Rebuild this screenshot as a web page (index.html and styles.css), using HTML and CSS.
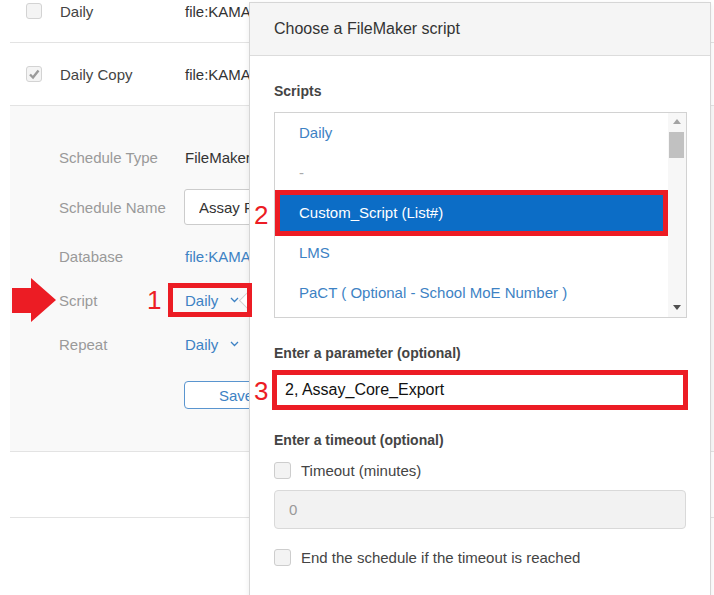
FILE: index.html
```html
<!DOCTYPE html>
<html lang="en">

<head>
    <meta charset="utf-8">
    <title>Choose a FileMaker script</title>
    <link rel="stylesheet" href="styles.css">
</head>

<body>
    <div class="page">
        <!-- schedule list behind the dialog -->
        <div class="schedules">
            <div class="row">
                <span class="check"></span>
                <span class="name">Daily</span>
                <span class="file">file:KAMAR_Assay</span>
            </div>
            <div class="row">
                <span class="check checked">
                    <svg width="12" height="12" viewBox="0 0 12 12"><path d="M2 6.5 L5 9.5 L10.5 2.5" fill="none" stroke="#9a9a9a" stroke-width="2.4"/></svg>
                </span>
                <span class="name">Daily Copy</span>
                <span class="file">file:KAMAR_Assay</span>
            </div>
            <div class="details">
                <div class="field">
                    <span class="label">Schedule Type</span>
                    <span class="value">FileMaker Script</span>
                </div>
                <div class="field name-field">
                    <span class="label">Schedule Name</span>
                    <input class="text-input" type="text" value="Assay Panel Export">
                </div>
                <div class="field">
                    <span class="label">Database</span>
                    <span class="value link">file:KAMAR_Assay</span>
                </div>
                <div class="field">
                    <span class="label">Script</span>
                    <span class="value link picker marked">Daily
                        <svg class="chev" width="9" height="6" viewBox="0 0 9 6"><path d="M1 1 L4.5 4.5 L8 1" fill="none" stroke="#3d82c4" stroke-width="1.3"/></svg>
                    </span>
                </div>
                <div class="field">
                    <span class="label">Repeat</span>
                    <span class="value link picker">Daily
                        <svg class="chev" width="9" height="6" viewBox="0 0 9 6"><path d="M1 1 L4.5 4.5 L8 1" fill="none" stroke="#3d82c4" stroke-width="1.3"/></svg>
                    </span>
                </div>
                <div class="actions">
                    <button class="btn-save">Save</button>
                </div>
            </div>
            <div class="row empty"></div>
        </div>

        <!-- popover dialog -->
        <div class="dialog">
            <div class="pointer"></div>
            <div class="dialog-head">Choose a FileMaker script</div>
            <div class="dialog-body">
                <div class="group-label">Scripts</div>
                <div class="listbox">
                    <div class="items">
                        <div class="item">Daily</div>
                        <div class="item muted">-</div>
                        <div class="item selected">Custom_Script (List#)</div>
                        <div class="item">LMS</div>
                        <div class="item">PaCT ( Optional - School MoE Number )</div>
                    </div>
                    <div class="scrollbar">
                        <div class="arrow up"></div>
                        <div class="thumb"></div>
                        <div class="track"></div>
                        <div class="arrow down"></div>
                    </div>
                </div>

                <div class="group-label param-label">Enter a parameter (optional)</div>
                <input class="param-input" type="text" value="2, Assay_Core_Export">

                <div class="group-label timeout-label">Enter a timeout (optional)</div>
                <label class="opt first-opt"><span class="box"></span>Timeout (minutes)</label>
                <input class="timeout-input" type="text" value="0" disabled>
                <label class="opt last-opt"><span class="box"></span>End the schedule if the timeout is reached</label>
            </div>
        </div>

        <!-- red annotations -->
        <svg class="red-arrow" width="46" height="46" viewBox="0 0 46 46">
            <polygon points="0,10 19,10 19,0 44,22 19,44 19,35 0,35" fill="#ec1c24"/>
        </svg>
        <span class="step step-1">1</span>
        <span class="step step-2">2</span>
        <span class="step step-3">3</span>
    </div>
</body>

</html>
```

FILE: styles.css
```css
*,
*::before,
*::after {
    box-sizing: border-box;
}

body {
    margin: 0;
    background: #fff;
    font-family: "Liberation Sans", Arial, sans-serif;
    color: #333;
}

.page {
    position: relative;
    width: 714px;
    height: 595px;
    overflow: hidden;
}

/* list in the background */
.schedules {
    margin-top: -20px;
    margin-left: 10px;
}

.row {
    display: flex;
    align-items: center;
    height: 63px;
    border-bottom: 1px solid #e3e3e3;
    padding-left: 16px;
    font-size: 15px;
}

.row.empty {
    height: 66px;
}

.check {
    display: flex;
    align-items: center;
    justify-content: center;
    width: 16px;
    height: 16px;
    border: 1px solid #d3d3d3;
    border-radius: 3px;
    background: #f4f4f4;
}

.name {
    width: 125px;
    margin-left: 18px;
    color: #444;
}

.file {
    color: #333;
}

.details {
    background: #f9f9f9;
    border-bottom: 1px solid #e3e3e3;
    padding: 29px 0 42px 49px;
    font-size: 15px;
}

.field {
    display: flex;
    align-items: center;
    height: 44px;
}

.field.name-field {
    margin: 6px 0 5px;
}

.label {
    width: 126px;
    color: #9a9a9a;
}

.value {
    color: #333;
    white-space: nowrap;
}

.link {
    color: #3d82c4;
}

.picker {
    position: relative;
    display: flex;
    align-items: center;
    height: 44px;
}

.chev {
    margin-left: 12px;
}

.marked::after {
    content: "";
    position: absolute;
    left: -17px;
    top: 5px;
    width: 84px;
    height: 34px;
    border: 5px solid #ec1c24;
    z-index: 5;
}

.text-input {
    width: 220px;
    height: 36px;
    margin-left: -1px;
    padding: 0 14px;
    border: 1px solid #ccc;
    border-radius: 3px;
    background: #fff;
    font-family: "Liberation Sans", Arial, sans-serif;
    font-size: 15px;
    color: #333;
}

.actions {
    margin-top: 15px;
    padding-left: 125px;
}

.btn-save {
    width: 110px;
    height: 28px;
    padding: 0 0 0 34px;
    text-align: left;
    border: 1px solid #5a95cf;
    border-radius: 4px;
    background: #fff;
    font-family: "Liberation Sans", Arial, sans-serif;
    font-size: 15px;
    color: #3d82c4;
}

/* dialog */
.dialog {
    position: absolute;
    left: 249px;
    top: 2px;
    width: 462px;
    height: 620px;
    background: #fff;
    border: 1px solid #d6d6d6;
    box-shadow: 0 2px 6px rgba(0, 0, 0, 0.08);
    z-index: 2;
}

.pointer {
    position: absolute;
    left: -8px;
    top: 290px;
    width: 15px;
    height: 15px;
    background: #fff;
    border-left: 1px solid #d0d0d0;
    border-bottom: 1px solid #d0d0d0;
    transform: rotate(45deg);
}

.dialog-head {
    position: relative;
    height: 53px;
    line-height: 52px;
    padding-left: 24px;
    background: #f5f5f5;
    border-bottom: 1px solid #dcdcdc;
    font-size: 16px;
    color: #333;
}

.dialog-body {
    padding: 25px 23px 0 24px;
}

.group-label {
    height: 20px;
    line-height: 20px;
    font-size: 14px;
    font-weight: bold;
    color: #444;
}

.listbox {
    display: flex;
    margin-top: 11px;
    height: 206px;
    border: 1px solid #d2d2d2;
    overflow: hidden;
}

.items {
    flex: 1;
}

.item {
    position: relative;
    height: 40px;
    line-height: 40px;
    padding-left: 24px;
    font-size: 15px;
    color: #3d82c4;
    white-space: nowrap;
}

.item.muted {
    color: #aaa;
}

.item.selected {
    background: #0c6dc6;
    color: #fff;
}

.item.selected::after {
    content: "";
    position: absolute;
    left: 0;
    right: 0;
    top: -3px;
    bottom: -3px;
    border: 5px solid #ec1c24;
}

.scrollbar {
    display: flex;
    flex-direction: column;
    width: 18px;
    background: #f7f7f7;
}

.arrow {
    height: 18px;
    position: relative;
}

.arrow::after {
    content: "";
    position: absolute;
    left: 5px;
    border-left: 4px solid transparent;
    border-right: 4px solid transparent;
}

.arrow.up::after {
    top: 6px;
    border-bottom: 5px solid #a3a3a3;
}

.arrow.down::after {
    top: 6px;
    border-top: 5px solid #505050;
}

.thumb {
    height: 26px;
    margin: 1px 2px 0 1px;
    background: #c1c1c1;
}

.track {
    flex: 1;
}

.param-label {
    margin-top: 25px;
}

.param-input {
    display: block;
    width: 412px;
    height: 36px;
    margin-top: 9px;
    padding: 0 10px;
    border: 1px solid #cfcfcf;
    outline: 5px solid #ec1c24;
    outline-offset: -3px;
    background: #fff;
    font-family: "Liberation Sans", Arial, sans-serif;
    font-size: 16px;
    color: #111;
}

.timeout-label {
    margin-top: 22px;
}

.opt {
    display: flex;
    align-items: center;
    height: 20px;
    font-size: 15px;
    color: #444;
}

.opt .box {
    width: 17px;
    height: 17px;
    margin-right: 10px;
    border: 1px solid #cdcdcd;
    border-radius: 3px;
    background: #f3f3f3;
}

.first-opt {
    margin-top: 10px;
}

.last-opt {
    margin-top: 18px;
}

.timeout-input {
    display: block;
    width: 412px;
    height: 39px;
    margin-top: 10px;
    padding: 0 14px;
    border: 1px solid #d9d9d9;
    border-radius: 4px;
    background: #f2f2f2;
    font-family: "Liberation Sans", Arial, sans-serif;
    font-size: 15px;
    color: #999;
}

/* annotations */
.red-arrow {
    position: absolute;
    left: 12px;
    top: 278px;
    z-index: 6;
}

.step {
    position: absolute;
    font-size: 26px;
    line-height: 30px;
    color: #ec1c24;
    z-index: 6;
}

.step-1 {
    left: 147px;
    top: 285px;
}

.step-2 {
    left: 254px;
    top: 200px;
}

.step-3 {
    left: 254px;
    top: 376px;
}
```
